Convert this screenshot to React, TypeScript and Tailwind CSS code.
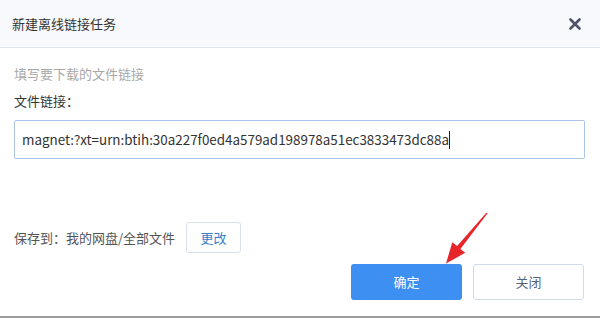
import React from "react";

export default function App() {
  return (
    <div className="relative w-[600px] h-[318px] bg-white flex flex-col font-['Noto_Sans_CJK_SC','Noto_Sans',sans-serif] border-b-2 border-[#9c9c9c] overflow-hidden">
      <div className="h-[48px] shrink-0 bg-[#f7f9fc] border-b border-[#dfe5ec] flex items-center justify-between pl-[12px] pr-[19px]">
        <span className="text-[13px] text-[#333]">新建离线链接任务</span>
        <svg width="12" height="12" viewBox="0 0 12 12" className="text-[#4f5569]">
          <path d="M1.5 1.5L10.5 10.5M10.5 1.5L1.5 10.5" stroke="currentColor" strokeWidth="2.6" strokeLinecap="round" />
        </svg>
      </div>
      <div className="flex flex-col px-[14px]">
        <div className="mt-[17px] text-[13px] leading-[18px] text-[#a8a8a8]">填写要下载的文件链接</div>
        <div className="mt-[9px] text-[13px] leading-[18px] text-[#333]">文件链接：</div>
        <div className="mt-[10px] w-[571px] h-[39px] border border-[#a9c5ea] rounded-[2px] flex items-center px-[7px]">
          <span className="text-[13.4px] text-[#333] font-['Noto_Sans_CJK_SC',sans-serif]">magnet:?xt=urn:btih:30a227f0ed4a579ad198978a51ec3833473dc88a</span>
          <span className="w-px h-[18px] bg-[#222]" />
        </div>
        <div className="mt-[63px] flex items-center">
          <span className="text-[13px] text-[#555]">保存到：我的网盘/全部文件</span>
          <button className="ml-[11px] w-[55px] h-[31px] border border-[#d6e1ec] rounded-[3px] text-[13px] text-[#3a7ec8] bg-white">更改</button>
        </div>
        <div className="mt-[11px] flex justify-end pr-[2px] gap-[11px]">
          <button className="w-[111px] h-[36px] rounded-[3px] bg-[#3d8ff2] text-white text-[13px]">确定</button>
          <button className="w-[111px] h-[36px] rounded-[3px] bg-white border border-[#cfdbe8] text-[#566677] text-[13px]">关闭</button>
        </div>
      </div>
      <svg className="absolute left-0 top-0 pointer-events-none" width="600" height="318" viewBox="0 0 600 318">
        <polygon
          points="487.6,213.3 460.4,248.9 465.2,252.8 446,263.5 452.3,242.2 457.1,246.1 486.4,212.7"
          fill="#e6262b"
        />
      </svg>
    </div>
  );
}
